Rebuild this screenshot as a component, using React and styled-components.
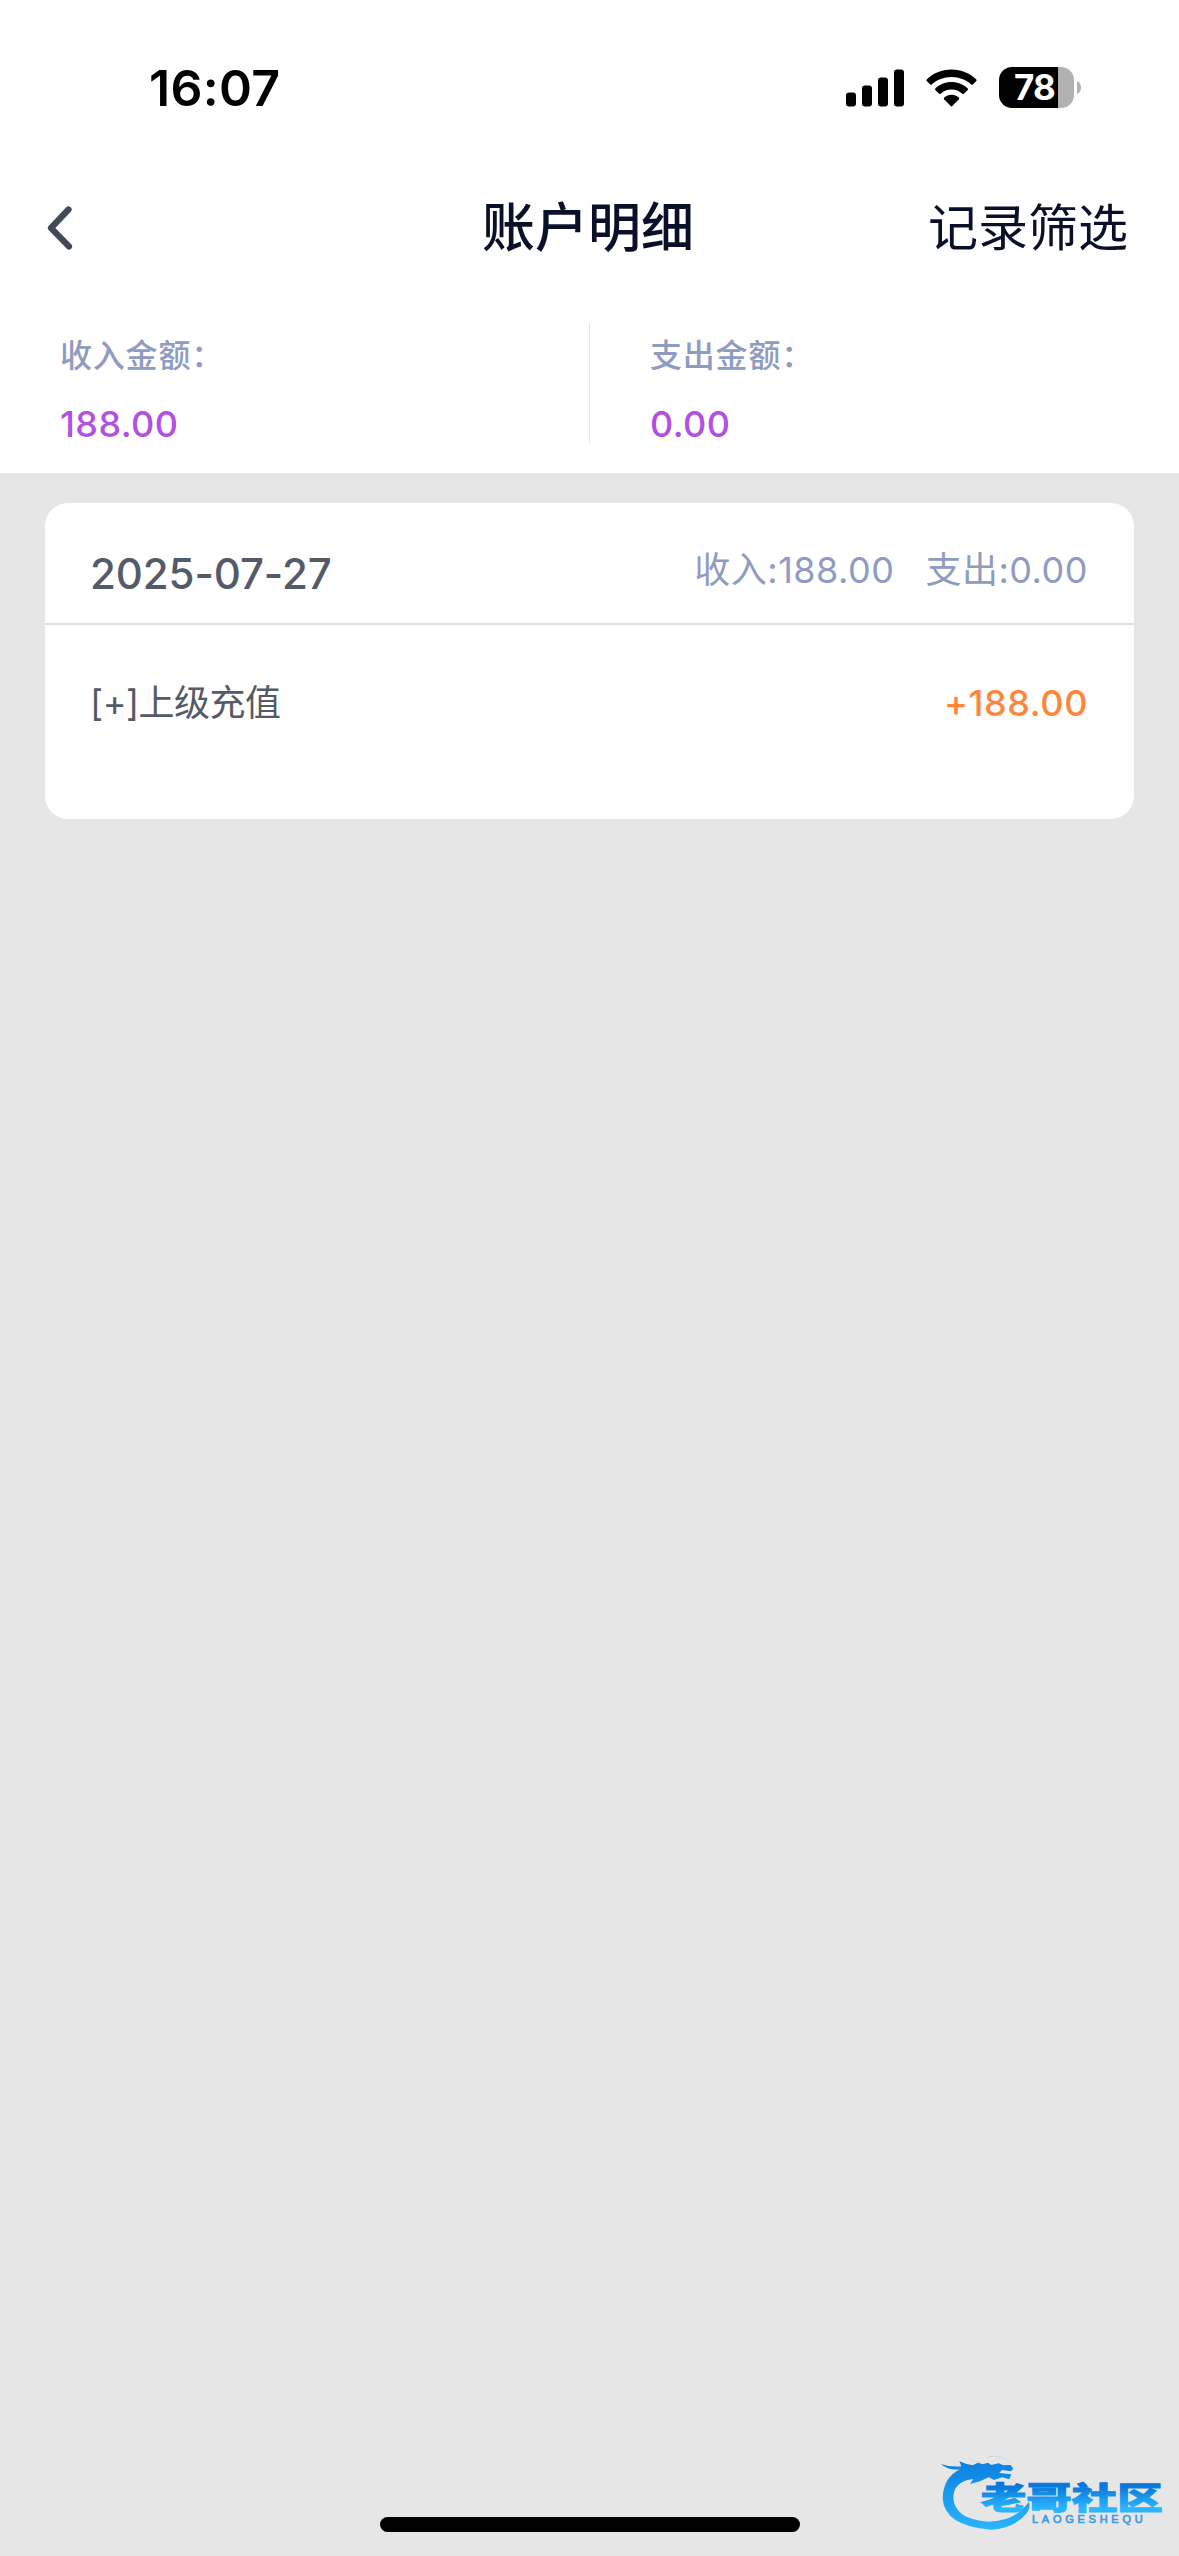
import React from 'react';
import styled, { createGlobalStyle } from 'styled-components';

const GlobalStyle = createGlobalStyle`
  * {
    box-sizing: border-box;
  }

  body {
    margin: 0;
    background: #e6e6e6;
    font-family: Inter, 'Noto Sans CJK SC', sans-serif;
  }
`;

const Page = styled.div`
  position: relative;
  display: flex;
  flex-direction: column;
  width: 1179px;
  height: 2556px;
  overflow: hidden;
  background: #e6e6e6;
`;

const StatusBar = styled.div`
  display: flex;
  align-items: center;
  justify-content: space-between;
  height: 176px;
  padding: 0 98px 0 149px;
  background: #fff;
`;

const Time = styled.div`
  font-size: 50px;
  font-weight: 600;
  line-height: 60px;
  letter-spacing: 0.3px;
  color: #000;
`;

const StatusIcons = styled.div`
  display: flex;
  align-items: center;
  padding-bottom: 1px;
`;

const SignalIcon = styled.svg`
  width: 58px;
  height: 38px;
  margin-right: 22px;
`;

const WifiIcon = styled.svg`
  width: 51px;
  height: 38px;
  margin-right: 22px;
`;

const Battery = styled.div`
  display: flex;
  align-items: center;
  justify-content: center;
  width: 75px;
  height: 41px;
  padding-right: 4px;
  border-radius: 13px;
  background: linear-gradient(to right, #000 59px, #b1b1b1 59px);
  font-size: 35px;
  font-weight: 700;
  line-height: 41px;
  letter-spacing: -0.7px;
  color: #fff;
`;

const BatteryTip = styled.svg`
  width: 4px;
  height: 13px;
  margin-left: 3px;
`;

const NavBar = styled.div`
  display: grid;
  grid-template-columns: 1fr auto 1fr;
  align-items: center;
  height: 103px;
  padding: 0 51px 0 45px;
  background: #fff;
`;

const BackIcon = styled.svg`
  width: 28px;
  height: 44px;
`;

const Title = styled.h1`
  margin: 0 0 0 3px;
  font-size: 53px;
  font-weight: 500;
  line-height: 80px;
  color: #0b1029;
`;

const FilterLink = styled.span`
  justify-self: end;
  font-size: 50px;
  line-height: 80px;
  color: #0b1029;
`;

const Totals = styled.div`
  display: grid;
  grid-template-columns: 590px 1fr;
  height: 194px;
  padding: 44px 0 30px;
  background: #fff;
`;

const Total = styled.div`
  display: flex;
  flex-direction: column;
  height: 120px;
  padding: 11px 0 0 60px;

  &:first-child {
    border-right: 1px solid #e6e6e6;
  }
`;

const TotalLabel = styled.div`
  font-size: 32px;
  font-weight: 500;
  line-height: 44px;
  letter-spacing: 0.8px;
  color: #8f9bbf;
`;

const TotalValue = styled.div`
  margin-top: 24px;
  font-size: 36px;
  font-weight: 500;
  line-height: 44px;
  letter-spacing: 0.4px;
  color: #b150e2;
`;

const Card = styled.section`
  margin: 30px 45px 0;
  height: 316px;
  border-radius: 23px;
  background: #fff;
`;

const CardHead = styled.div`
  display: flex;
  justify-content: space-between;
  height: 122px;
  padding: 0 46px 0 45px;
  border-bottom: 2px solid #e0e0e0;
`;

const CardDate = styled.div`
  padding-top: 21px;
  font-size: 42px;
  font-weight: 500;
  line-height: 100px;
  letter-spacing: -0.1px;
  color: #545a68;
`;

const DaySummary = styled.div`
  display: flex;
  gap: 31px;
  padding-top: 17px;
  font-size: 36px;
  line-height: 100px;
  letter-spacing: 0.5px;
  color: #8f9bbf;
`;

const Entry = styled.div`
  display: flex;
  justify-content: space-between;
  padding: 28px 46px 28px 45px;
  font-size: 36px;
  line-height: 100px;
  color: #545a68;
`;

const EntryName = styled.span`
  letter-spacing: -0.5px;
`;

const Amount = styled.span`
  font-weight: 500;
  letter-spacing: 0.6px;
  color: #ff853c;
`;

const HomeIndicator = styled.div`
  position: absolute;
  bottom: 24px;
  left: 380px;
  width: 420px;
  height: 15px;
  border-radius: 8px;
  background: #000;
`;

const Watermark = styled.svg`
  position: absolute;
  right: 0;
  bottom: 0;
  width: 259px;
  height: 116px;
`;

const totals = [
  { label: '收入金额：', value: '188.00' },
  { label: '支出金额：', value: '0.00' },
];

const days = [
  {
    date: '2025-07-27',
    income: '188.00',
    expense: '0.00',
    entries: [{ name: '[+]上级充值', amount: '+188.00' }],
  },
];

const CommunityLogo = () => (
  <Watermark viewBox="0 0 777 348">
    <defs>
      <linearGradient id="ring" gradientUnits="userSpaceOnUse" x1="0" y1="65" x2="0" y2="265">
        <stop offset="0" stopColor="#0b80e0" />
        <stop offset="1" stopColor="#29b4fc" />
      </linearGradient>
      <linearGradient id="name" x1="0" y1="0" x2="0" y2="1">
        <stop offset="0.3" stopColor="#0878dc" />
        <stop offset="0.8" stopColor="#2ab6ff" />
      </linearGradient>
    </defs>
    <path
      fill="url(#ring)"
      d="M62 72 Q92 82 124 79 L118 64 Q140 74 158 76 L174 68 L188 73 L204 68 L214 75 L236 70 L250 76 L272 75 L280 87 L272 94 L246 90 L238 99 L274 103 L268 118 L246 112 L222 120 L206 112 L180 124 L150 132 L160 117 Q100 124 100 174 Q104 238 204 245 Q286 244 326 186 Q334 200 318 222 Q280 266 212 269 Q72 258 68 174 Q70 112 120 88 Q86 92 62 72 Z"
    />
    <path fill="none" stroke="#c9dbe9" strokeWidth="3" d="M144 54 Q160 66 184 68 M204 50 Q252 44 270 70" />
    <text
      transform="translate(182 206) scale(1.5 1)"
      fontFamily="Noto Sans CJK SC, sans-serif"
      fontSize="91"
      fontWeight="900"
      textLength="364"
      fill="url(#name)"
      stroke="url(#name)"
      strokeWidth="3"
    >
      老哥社区
    </text>
    <text
      x="336"
      y="248"
      fontFamily="Liberation Sans, sans-serif"
      fontSize="33"
      fill="#3f9be0"
      stroke="#3f9be0"
      strokeWidth="2"
      textLength="332"
    >
      LAOGESHEQU
    </text>
  </Watermark>
);

const App = () => (
  <>
    <GlobalStyle />
    <Page>
      <StatusBar>
        <Time>16:07</Time>
        <StatusIcons>
          <SignalIcon viewBox="0 0 58 38">
            <rect x="0" y="23.5" width="10" height="14" rx="3" />
            <rect x="16" y="16.5" width="10" height="21" rx="3" />
            <rect x="32" y="8.5" width="10" height="29" rx="3" />
            <rect x="48" y="0.5" width="10" height="37" rx="3" />
          </SignalIcon>
          <WifiIcon viewBox="0 0 51 38">
            <path d="M25.5 0.5C15.8 0.5 7 4.3 0.7 10.4Q0 11.2 0.7 12L4.2 15.5Q5 16.2 5.8 15.5C10.9 10.8 17.8 8 25.5 8S40.1 10.8 45.2 15.5Q46 16.2 46.8 15.5L50.3 12Q51 11.2 50.3 10.4C44 4.3 35.2 0.5 25.5 0.5Z" />
            <path d="M25.5 13C19.2 13 13.5 15.5 9.3 19.4Q8.6 20.2 9.3 21L13.1 24.7Q13.9 25.4 14.7 24.7C17.5 22.1 21.3 20.5 25.5 20.5S33.5 22.1 36.3 24.7Q37.1 25.4 37.9 24.7L41.7 21Q42.4 20.2 41.7 19.4C37.5 15.5 31.8 13 25.5 13Z" />
            <path d="M25.5 25.7C22.7 25.7 20.1 26.8 18.1 28.6Q17.4 29.4 18.1 30.2L24.7 37Q25.5 37.8 26.3 37L32.9 30.2Q33.6 29.4 32.9 28.6C30.9 26.8 28.3 25.7 25.5 25.7Z" />
          </WifiIcon>
          <Battery>78</Battery>
          <BatteryTip viewBox="0 0 4 13">
            <path fill="#b1b1b1" d="M0 0Q4 2 4 6.5T0 13Z" />
          </BatteryTip>
        </StatusIcons>
      </StatusBar>

      <NavBar>
        <BackIcon viewBox="0 0 28 44">
          <path
            d="M23.5 3.5L6 22L24 40.5"
            fill="none"
            stroke="#434956"
            strokeWidth="6.2"
            strokeLinecap="round"
            strokeLinejoin="round"
          />
        </BackIcon>
        <Title>账户明细</Title>
        <FilterLink>记录筛选</FilterLink>
      </NavBar>

      <Totals>
        {totals.map((total) => (
          <Total key={total.label}>
            <TotalLabel>{total.label}</TotalLabel>
            <TotalValue>{total.value}</TotalValue>
          </Total>
        ))}
      </Totals>

      {days.map((day) => (
        <Card key={day.date}>
          <CardHead>
            <CardDate>{day.date}</CardDate>
            <DaySummary>
              <span>收入:{day.income}</span>
              <span>支出:{day.expense}</span>
            </DaySummary>
          </CardHead>
          {day.entries.map((entry) => (
            <Entry key={entry.name}>
              <EntryName>{entry.name}</EntryName>
              <Amount>{entry.amount}</Amount>
            </Entry>
          ))}
        </Card>
      ))}

      <CommunityLogo />
      <HomeIndicator />
    </Page>
  </>
);

export default App;
